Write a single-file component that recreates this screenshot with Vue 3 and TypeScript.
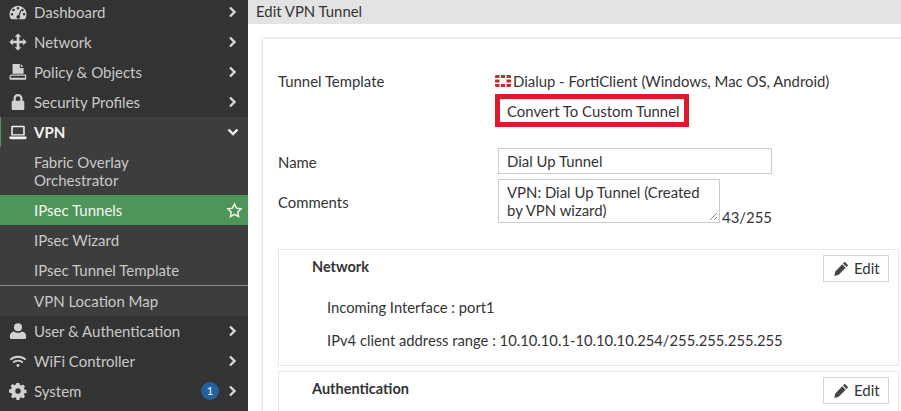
<script setup lang="ts">
const topItems = [
  { label: 'Dashboard', icon: 'dash' },
  { label: 'Network', icon: 'net' },
  { label: 'Policy & Objects', icon: 'policy' },
  { label: 'Security Profiles', icon: 'lock' },
];
const bottomItems = [
  { label: 'User & Authentication', icon: 'user', badge: 0 },
  { label: 'WiFi Controller', icon: 'wifi', badge: 0 },
  { label: 'System', icon: 'cog', badge: 1 },
];
const sections = [
  { title: 'Network', lines: ['Incoming Interface : port1', 'IPv4 client address range : 10.10.10.1-10.10.10.254/255.255.255.255'] },
  { title: 'Authentication', lines: [] as string[] },
];
</script>

<template>
  <div class="page">
    <aside class="sidebar">
      <div v-for="item in topItems" :key="item.label" class="nav-row">
        <svg class="nav-icon" viewBox="0 0 20 20">
          <template v-if="item.icon === 'dash'">
            <path fill-rule="evenodd" d="M10 3a9.500 9.500 0 0 0-9.500 9.500c0 1.700.5 3.300 1.300 4.700.3.500.8.800 1.400.8h13.600c.6 0 1.100-.3 1.400-.8.800-1.400 1.300-3 1.300-4.700A9.500 9.500 0 0 0 10 3zM10 4.500a1.400 1.400 0 1 1 0 2.800 1.400 1.400 0 0 1 0-2.800zM5 6.500a1.400 1.400 0 1 1 0 2.800 1.400 1.400 0 0 1 0-2.800zm10 0a1.400 1.400 0 1 1 0 2.800 1.400 1.400 0 0 1 0-2.800zM3.300 11a1.400 1.400 0 1 1 0 2.800 1.400 1.400 0 0 1 0-2.800zm13.400 0a1.400 1.400 0 1 1 0 2.800 1.400 1.400 0 0 1 0-2.800zM12.800 7.800l1.200.5-2.300 5.600a2.100 2.100 0 1 1-1.200-.5z" />
          </template>
          <path v-else-if="item.icon === 'net'" d="M10 .5l3.800 3.800h-2.300v4.200h4.200V6.200L19.500 10l-3.800 3.800v-2.300h-4.200v4.200h2.300L10 19.500l-3.800-3.800h2.300v-4.200H4.300v2.300L.5 10l3.800-3.800v2.300h4.200V4.300H6.200z" />
          <template v-else-if="item.icon === 'policy'">
            <path d="M4 1h8v4.500h4.200V12H4z" />
            <path d="M13 1l3 3.300h-3z" />
            <path fill-rule="evenodd" d="M3 12.800h15.500c.4 0 .6.3.6.6v4.400c0 .5-.4.900-.9.900H2a1.500 1.500 0 0 1-1.500-1.500v-2a2.500 2.500 0 0 1 2.500-2.400zm0 1.400c-.6 0-1.100.5-1.100 1.100v1.200h15.800v-2.300z" />
          </template>
          <path v-else fill-rule="evenodd" d="M5 8.500V6a5 5 0 0 1 10 0v2.500h.5c.8 0 1.500.7 1.500 1.500v7.500c0 .8-.7 1.500-1.500 1.500h-11C3.700 19 3 18.300 3 17.500V10c0-.8.7-1.500 1.500-1.500zM7.500 8.500h5V6a2.500 2.500 0 0 0-5 0z" />
        </svg>
        <span class="nav-label">{{ item.label }}</span>
        <svg class="chev" viewBox="0 0 10 12"><path d="M2 1.500L6.500 6 2 10.500" /></svg>
      </div>

      <div class="vpn-group">
        <div class="nav-row vpn-head">
          <svg class="nav-icon" viewBox="0 0 20 20">
            <path fill-rule="evenodd" d="M3.500 3h13c.6 0 1 .4 1 1v10h-15V4c0-.6.4-1 1-1zm.7 1.700v7.700h11.600V4.700z" />
            <path d="M.5 15h19v1.500c0 .8-.7 1.500-1.500 1.500H2c-.8 0-1.500-.7-1.500-1.500z" />
          </svg>
          <span class="nav-label">VPN</span>
          <svg class="chev" viewBox="0 0 12 10"><path d="M1.500 2.500L6 7l4.500-4.500" /></svg>
        </div>
        <div class="sub-row fabric">Fabric Overlay<br />Orchestrator</div>
        <div class="sub-row active">
          <span>IPsec Tunnels</span>
          <svg class="star" viewBox="0 0 20 20"><path d="M10 2.300l2.400 4.900 5.400.8-3.900 3.800.9 5.400-4.800-2.600-4.800 2.600.9-5.400L2.200 8l5.400-.8z" /></svg>
        </div>
        <div class="sub-row">IPsec Wizard</div>
        <div class="sub-row">IPsec Tunnel Template</div>
        <div class="sub-row map">VPN Location Map</div>
      </div>

      <div v-for="item in bottomItems" :key="item.label" class="nav-row">
        <svg class="nav-icon" viewBox="0 0 20 20">
          <template v-if="item.icon === 'user'">
            <circle cx="10" cy="5.800" r="4.500" />
            <path d="M5.500 10.500c1.200 1 2.800 1.500 4.500 1.500s3.300-.5 4.500-1.500c2.500.3 4.500 2.200 4.500 5v1.800c0 1-.8 1.700-1.700 1.700H2.700C1.800 19 1 18.300 1 17.300v-1.800c0-2.800 2-4.700 4.500-5z" />
          </template>
          <template v-else-if="item.icon === 'wifi'">
            <path class="wave" d="M1.500 8.500c4.800-4.300 12.200-4.300 17 0" />
            <path class="wave" d="M4.700 11.700c3-2.700 7.600-2.700 10.600 0" />
            <circle cx="10" cy="15" r="1.600" />
          </template>
          <path v-else fill-rule="evenodd" d="M8.400 1h3.200l.5 2.400 1.500.6 2-1.300 2.200 2.200-1.300 2 .6 1.500 2.400.5v3.200l-2.400.5-.6 1.500 1.300 2-2.200 2.200-2-1.300-1.500.6-.5 2.400H8.400l-.5-2.400-1.500-.6-2 1.300-2.200-2.200 1.300-2-.6-1.500L0 11.600V8.400l2.400-.5.6-1.500-1.300-2 2.200-2.200 2 1.300 1.500-.6zM10 7a3 3 0 1 0 0 6 3 3 0 0 0 0-6z" />
        </svg>
        <span class="nav-label">{{ item.label }}</span>
        <span v-if="item.badge" class="badge">{{ item.badge }}</span>
        <svg class="chev" viewBox="0 0 10 12"><path d="M2 1.500L6.500 6 2 10.500" /></svg>
      </div>
    </aside>

    <main class="main">
      <header class="title-bar">Edit VPN Tunnel</header>
      <div class="card">
        <div class="form-row template-row">
          <label>Tunnel Template</label>
          <div class="template-value">
            <div class="template-name">
              <svg class="forti" viewBox="0 0 16 12">
                <path d="M4.500 0H1.500C.7 0 0 .7 0 1.500V3h4.500zM4.500 4.500H0v3h4.500zM4.500 9H0v1.500C0 11.300.7 12 1.500 12h3zM6 0h4v3H6zM6 9h4v3H6zM11.500 0h3c.8 0 1.500.7 1.500 1.500V3h-4.500zM11.500 4.500H16v3h-4.500zM11.500 9H16v1.500c0 .8-.7 1.500-1.500 1.500h-3z" />
              </svg>
              <span>Dialup - FortiClient (Windows, Mac OS, Android)</span>
            </div>
            <button class="convert" type="button">Convert To Custom Tunnel</button>
          </div>
        </div>
        <div class="form-row name-row">
          <label>Name</label>
          <div class="input-box name-input">Dial Up Tunnel</div>
        </div>
        <div class="form-row comment-row">
          <label>Comments</label>
          <div class="comment-wrap">
            <div class="input-box comment-box">
              VPN: Dial Up Tunnel (Created by VPN wizard)
              <svg class="grip" viewBox="0 0 9 9"><path d="M1 8l7-7M5 8l3-3" /></svg>
            </div>
            <span class="counter">43/255</span>
          </div>
        </div>

        <section v-for="s in sections" :key="s.title" class="panel">
          <div class="panel-head">
            <h3>{{ s.title }}</h3>
            <button class="edit" type="button">
              <svg viewBox="0 0 14 14"><path d="M10 .8l3.200 3.200-1.600 1.600-3.200-3.200zM7.700 3.100l3.200 3.200-6.600 6.600-4 1 .9-4z" /></svg>
              Edit
            </button>
          </div>
          <p v-for="line in s.lines" :key="line">{{ line }}</p>
        </section>
      </div>
    </main>
  </div>
</template>

<style>
html,
body {
  margin: 0;
  overflow: hidden;
}
</style>

<style scoped>
.page {
  display: flex;
  width: 901px;
  height: 411px;
  overflow: hidden;
  background: #fff;
  font-family: Lato, "Open Sans", sans-serif;
  font-size: 14.900px;
  color: #333;
}

.sidebar {
  width: 248px;
  flex: none;
  margin-top: -3px;
  background: #333;
  color: #c9c9c9;
}

.nav-row {
  display: flex;
  align-items: center;
  height: 30px;
  padding: 0 9px 0 9px;
  font-size: 15px;
}

.nav-icon {
  width: 18px;
  height: 18px;
  margin-right: 7px;
  flex: none;
  fill: #d2d2d2;
}

.nav-icon .wave {
  fill: none;
  stroke: #d2d2d2;
  stroke-width: 2;
}

.nav-label {
  flex: 1;
}

.chev {
  width: 12px;
  height: 12px;
  margin-left: 8px;
  fill: none;
  stroke: #d8d8d8;
  stroke-width: 2.400;
}

.badge {
  width: 18px;
  height: 18px;
  border-radius: 50%;
  background: #24609b;
  color: #e8eef5;
  font-size: 12px;
  line-height: 18px;
  text-align: center;
}

.vpn-group {
  background: #3d3d3d;
}

.vpn-head {
  border-left: 1px solid #4d9558;
  padding-left: 8px;
  font-weight: 700;
  color: #f2f2f2;
}

.vpn-head .nav-icon {
  fill: #f2f2f2;
}

.vpn-head .chev {
  stroke: #f2f2f2;
}

.sub-row {
  display: flex;
  align-items: center;
  justify-content: space-between;
  height: 30px;
  padding: 0 5px 0 34px;
  font-size: 15px;
  box-sizing: border-box;
}

.fabric {
  display: block;
  height: 48px;
  padding-top: 6px;
  line-height: 18px;
}

.active {
  background: #4d9558;
  color: #f4f8f4;
}

.star {
  width: 17px;
  height: 17px;
  fill: none;
  stroke: #f4f8f4;
  stroke-width: 1.700;
}

.map {
  height: 31px;
  border-top: 1px solid #8a8a8a;
}

.main {
  flex: 1;
  min-width: 0;
}

.title-bar {
  height: 24px;
  padding-left: 8px;
  background: #e3e3e3;
  line-height: 23px;
}

.card {
  width: 640px;
  margin: 15px 0 0 15px;
  padding: 0 4px 0 15px;
  box-sizing: border-box;
  height: 400px;
  background: #fff;
  box-shadow: 0 0 3px #bbb;
}

.form-row {
  display: grid;
  grid-template-columns: 218px 1fr;
}

.form-row label {
  line-height: 20px;
}

.template-row {
  padding-top: 32px;
}

.template-value {
  margin-left: -1px;
}

.template-name {
  display: flex;
  align-items: center;
  height: 20px;
  white-space: nowrap;
}

.forti {
  width: 16px;
  height: 12px;
  margin-right: 2px;
  fill: #b8312f;
}

.convert {
  display: block;
  width: 194px;
  height: 33px;
  margin-top: 3px;
  padding: 1px 0 0 7px;
  border: 5px solid #dc1c2e;
  background: #fff;
  font: inherit;
  color: #333;
  text-align: left;
  white-space: nowrap;
}

.name-row {
  margin-top: 21px;
  align-items: center;
}

.name-row label {
  padding-top: 2px;
}

.input-box {
  box-sizing: border-box;
  border: 1px solid #ccc;
  padding-left: 8px;
  margin-left: 2px;
}

.name-input {
  width: 274px;
  height: 26px;
  line-height: 24px;
}

.comment-row {
  margin-top: 5px;
}

.comment-row label {
  padding-top: 13px;
}

.comment-wrap {
  display: flex;
  align-items: flex-end;
}

.comment-box {
  position: relative;
  width: 222px;
  height: 44px;
  line-height: 18px;
  padding: 3px 8px 0;
}

.grip {
  position: absolute;
  right: 1px;
  bottom: 1px;
  width: 9px;
  height: 9px;
  fill: none;
  stroke: #888;
}

.counter {
  margin-left: 2px;
  line-height: 14px;
  transform: translateY(1px);
}

.panel {
  margin: 0 0 5px;
  border: 1px solid #e8e8e8;
  padding: 5px 9px 15px 33px;
  box-sizing: border-box;
}

.panel:first-of-type {
  margin-top: 26px;
  height: 117px;
}

.panel-head {
  display: flex;
  justify-content: space-between;
  align-items: flex-start;
}

.panel h3 {
  margin: 3px 0 0;
  font-size: 14.500px;
  font-weight: 700;
  line-height: 18px;
}

.panel p {
  margin: 0 0 14px 15px;
  font-size: 14.750px;
  line-height: 19px;
}

.panel-head + p {
  margin-top: 16px;
}

.edit {
  display: flex;
  align-items: center;
  gap: 5px;
  width: 66px;
  height: 27px;
  padding: 0 0 1px 10px;
  border: 1px solid #d4d4d4;
  background: #fff;
  font: inherit;
  font-size: 15px;
  color: #333;
}

.edit svg {
  width: 15px;
  height: 15px;
  fill: #444;
}
</style>
